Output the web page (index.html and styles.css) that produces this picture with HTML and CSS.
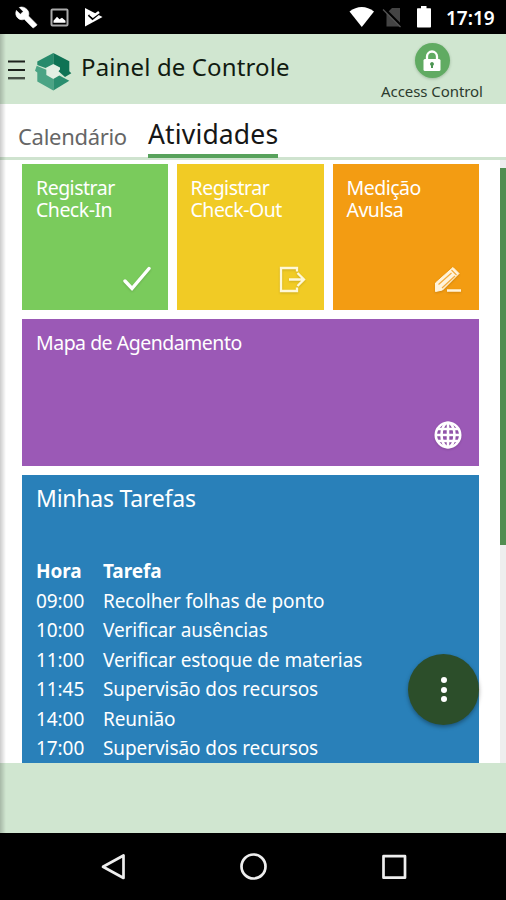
FILE: index.html
```html
<!DOCTYPE html>
<html lang="pt-BR">
<head>
<meta charset="utf-8">
<title>Painel de Controle</title>
<link rel="stylesheet" href="styles.css">
</head>
<body>
<div class="phone">
  <div class="status">
    <svg class="status-left" width="110" height="34" viewBox="0 0 110 34">
      <path fill="#fff" stroke="#fff" stroke-width=".6" d="M36.600 24.200 28.500 16c.8-2.200.3-4.700-1.400-6.400C25 7.300 22 6.300 19.300 7.500l3.900 3.900-2.800 2.900-4-3.900c-1.300 2.700-.6 5.900 1.600 7.800 1.800 1.600 4.200 1.900 6.300 1.100l8.200 8.300c.4.400.9.400 1.300 0l2.800-2.200c.4-.3.400-.9 0-1.200z"/>
      <rect x="51.500" y="9.500" width="16" height="16" rx="1" fill="none" stroke="#aaa" stroke-width="2"/>
      <path fill="#fff" d="M53.500 22.800v-2l3.500-4 2.500 2.500 2.500-1.500 3.500 3v2z"/>
      <path fill="#fff" d="M85 8v18.500L102.500 17z"/>
      <path fill="none" stroke="#000" stroke-width="2" d="m88.500 15 4 4 8.500-7"/>
      <path fill="none" stroke="#fff" stroke-width="2.500" d="m90 14 3 2.500 6-4.500"/>
    </svg>
    <svg class="status-right" width="90" height="34" viewBox="0 0 90 34">
      <path fill="#fff" d="M.5 11.500C8 5.500 17.500 5.500 25 11.500L12.800 27z"/>
      <path fill="#444" d="M37.500 13.500 43 8h8v18.500H37.500z"/>
      <path stroke="#000" stroke-width="2.500" d="m35 8.500 18 18"/>
      <path stroke="#555" stroke-width="1.300" d="m34 9.500 17.500 17.500"/>
      <path fill="#fff" d="M68.500 8.300H72V6h5.500v2.300H81c.6 0 1 .4 1 1V26.500c0 .6-.4 1-1 1H69c-.6 0-1-.4-1-1V9.300c0-.6.300-1 .5-1z"/>
    </svg>
    <span class="clock">17:19</span>
  </div>

  <div class="app">
    <header class="header">
      <svg class="menu" width="17" height="20" viewBox="0 0 17 20"><path stroke="#1d211d" stroke-width="2.200" d="M0 1.500h17M0 10h17"/><path stroke="#465046" stroke-width="2.400" d="M0 18.200h17"/></svg>
      <svg class="logo" width="37" height="38" viewBox="0 0 37 38">
        <path fill="#e2efe3" d="m18.300 11 7 3.500v8l-7 3.500-7-4v-8z"/>
        <path fill="#278b6c" d="M2.300 8.500 18.300 0v11L10.500 15 2.300 12z"/>
        <path fill="#0f7355" d="m18.300 0 16 8.200v10l2 2-6.300 3.700-6.500-5.700L25 16.500v-2L18.300 11z"/>
        <path fill="#4ba485" d="m1.700 12.700 9.600 4v5.200l7 4v11.600l-16-9v-9L0 17.700z"/>
        <path fill="#2a8e6f" d="m18.300 25.900 6-3.400 10 5.200-16 9.800z"/>
      </svg>
      <h1 class="title">Painel de Controle</h1>
      <div class="access">
        <div class="access-icon">
          <svg width="20" height="22" viewBox="0 0 20 22"><path fill="none" stroke="#fff" stroke-width="2.300" d="M5 10V6.500a5 5 0 0 1 10 0V10"/><rect x="1.500" y="9" width="17" height="12" rx="1.500" fill="#fff"/><path fill="#4b9552" d="M10 12a2 2 0 0 0-1 3.700V18h2v-2.300A2 2 0 0 0 10 12z"/></svg>
        </div>
        <span class="access-label">Access Control</span>
      </div>
    </header>

    <nav class="tabs">
      <span class="tab tab-calendar">Calendário</span>
      <span class="tab tab-active">Atividades</span>
    </nav>

    <main class="content">
      <div class="tiles">
        <section class="tile green"><span class="tile-label">Registrar<br>Check-In</span>
          <svg class="tile-icon" width="28" height="28" viewBox="0 0 28 28"><path fill="none" stroke="#fff" stroke-width="3.400" stroke-linecap="round" stroke-linejoin="miter" d="m2 16 7 7.500L26 3.500"/></svg></section>
        <section class="tile yellow"><span class="tile-label">Registrar<br>Check-Out</span>
          <svg class="tile-icon" width="28" height="28" viewBox="0 0 28 28"><path fill="none" stroke="#fff8d8" stroke-width="2.300" d="M18 6.500V3H2v23h16v-3.500M10 14.500h14.500M18.500 8l6.500 6.500-6.500 6.500"/></svg></section>
        <section class="tile orange"><span class="tile-label">Medição<br>Avulsa</span>
          <svg class="tile-icon" width="28" height="28" viewBox="0 0 28 28"><path fill="#fff4dc" stroke="#fff4dc" stroke-width="1" stroke-linejoin="round" d="M1.500 26.500V18L19 2.500l6 6L8.500 25z"/><path fill="none" stroke="#f5ac3d" stroke-width="1.200" d="m4.500 19.500 13-11.500M8 23l13-12M17.500 5l5 5"/><path stroke="#fff4dc" stroke-width="2.500" d="M13 25.500h14"/></svg></section>
        <section class="tile purple"><span class="tile-label">Mapa de Agendamento</span>
          <svg class="tile-icon" width="28" height="28" viewBox="0 0 28 28"><g fill="none" stroke="#fff" stroke-width="2.600"><circle cx="14" cy="14" r="12.200"/><ellipse cx="14" cy="14" rx="6.500" ry="12.200"/><path d="M14 2v24M2 14h24M4 8h20M4 20h20"/></g></svg></section>
        <section class="tile blue">
          <h2 class="tasks-title">Minhas Tarefas</h2>
          <table class="tasks">
            <tr><th>Hora</th><th>Tarefa</th></tr>
            <tr><td>09:00</td><td>Recolher folhas de ponto</td></tr>
            <tr><td>10:00</td><td>Verificar ausências</td></tr>
            <tr><td>11:00</td><td>Verificar estoque de materias</td></tr>
            <tr><td>11:45</td><td>Supervisão dos recursos</td></tr>
            <tr><td>14:00</td><td>Reunião</td></tr>
            <tr><td>17:00</td><td>Supervisão dos recursos</td></tr>
          </table>
        </section>
      </div>
      <div class="scrollbar"><div class="thumb"></div></div>
      <div class="fab"><i></i><i></i><i></i></div>
    </main>
    <footer class="footer"></footer>
  </div>

  <div class="navbar">
    <svg width="506" height="67" viewBox="0 0 506 67"><g fill="none" stroke="#eee" stroke-width="2.700" stroke-linejoin="round"><path d="M123.500 22.500v22.500L103 33.800z"/><circle cx="253.500" cy="33.500" r="12"/><rect x="383.500" y="23.200" width="21.500" height="21.500"/></g></svg>
  </div>
</div>
</body>
</html>
```
FILE: styles.css
```css
* { box-sizing: border-box; }
body { margin: 0; background: #000; font-family: "Noto Sans", "Open Sans", sans-serif; }
svg { display: block; flex: none; }
.phone { width: 506px; height: 900px; display: flex; flex-direction: column; overflow: hidden; }
.status { height: 34px; background: #000; display: flex; }
.status-right { margin-left: 239px; }
.clock { margin-left: 7px; color: #fff; font-size: 19px; font-weight: 600; line-height: 36px; white-space: nowrap; }
.app { position: relative; height: 799px; display: flex; flex-direction: column; background: #fff; }
.app::before { content: ""; position: absolute; z-index: 2; left: 0; top: 0; bottom: 0; width: 6px; background: linear-gradient(90deg, rgba(0,0,0,.2), rgba(0,0,0,0)); }
.header { height: 70px; background: #d0e6d0; display: flex; padding-left: 7.500px; }
.menu { margin-top: 25.500px; }
.logo { margin: 19px 0 0 10.500px; }
.title { margin: 0 0 0 9px; font-size: 24px; font-weight: 400; line-height: 66px; color: #111b11; white-space: nowrap; letter-spacing: .13px; }
.access { margin-left: auto; width: 104px; margin-right: 22px; display: flex; flex-direction: column; align-items: center; padding-top: 9px; }
.access-icon { width: 35px; height: 35px; border-radius: 50%; background: #60ab62; display: flex; justify-content: center; padding-top: 7px; box-shadow: 0 1px 3px rgba(0,60,0,.25); }
.access-label { font-size: 15px; line-height: 20px; margin-top: 3px; color: #2c3b2e; white-space: nowrap; letter-spacing: -.07px; }
.tabs { height: 56px; display: flex; padding-left: 18px; border-bottom: 3px solid #cfe3cf; flex: none; }
.tab { white-space: nowrap; }
.tab-calendar { font-size: 22px; line-height: 65px; color: #666; width: 130px; letter-spacing: -.3px; }
.tab-active { font-size: 26.500px; line-height: 60px; height: 54px; width: 130px; color: #161616; border-bottom: 4px solid #58a25c; letter-spacing: .15px; }
.content { position: relative; height: 603px; display: flex; overflow: hidden; }
.tiles { margin: 4px 0 0 22px; width: 457px; display: grid; grid-template-columns: 146px 147.500px 146.500px; grid-template-rows: 146px 147px 288px; column-gap: 8.500px; row-gap: 9px; flex: none; }
.tile { position: relative; color: #fff; padding: 13px 14px; font-size: 19.500px; line-height: 22px; white-space: nowrap; letter-spacing: -.5px; }
.tile-icon { position: absolute; right: 17px; bottom: 17px; filter: drop-shadow(0 1px 1px rgba(0,0,0,.15)); }
.green { background: #7acb5c; }
.yellow { background: #f1cb25; }
.orange { background: #f39c12; }
.purple { background: #9b59b6; grid-column: 1 / -1; }
.blue { background: #2980b9; grid-column: 1 / -1; }
.tasks-title { margin: -4px 0 0; font-size: 23px; line-height: 28px; font-weight: 400; letter-spacing: -.22px; }
.tasks { border-collapse: collapse; margin-top: 45px; font-size: 19px; line-height: 29.500px; letter-spacing: -.08px; }
.tasks th, .tasks td { padding: 0; text-align: left; height: 29.500px; }
.tasks th:first-child { width: 67px; }
.scrollbar { position: absolute; right: 0; top: 0; width: 6px; height: 100%; padding-top: 8px; background: #eee; }
.thumb { height: 377px; background: #528e52; }
.fab { position: absolute; left: 408px; top: 494px; width: 71px; height: 71px; border-radius: 50%; background: #2c4e2a; display: flex; flex-direction: column; align-items: center; justify-content: center; gap: 3.500px; box-shadow: 0 2px 4px rgba(0,0,0,.35); }
.fab i { width: 6px; height: 6px; border-radius: 50%; background: #fff; }
.footer { height: 70px; background: #d0e6d0; }
.navbar { height: 67px; background: #000; }
```
